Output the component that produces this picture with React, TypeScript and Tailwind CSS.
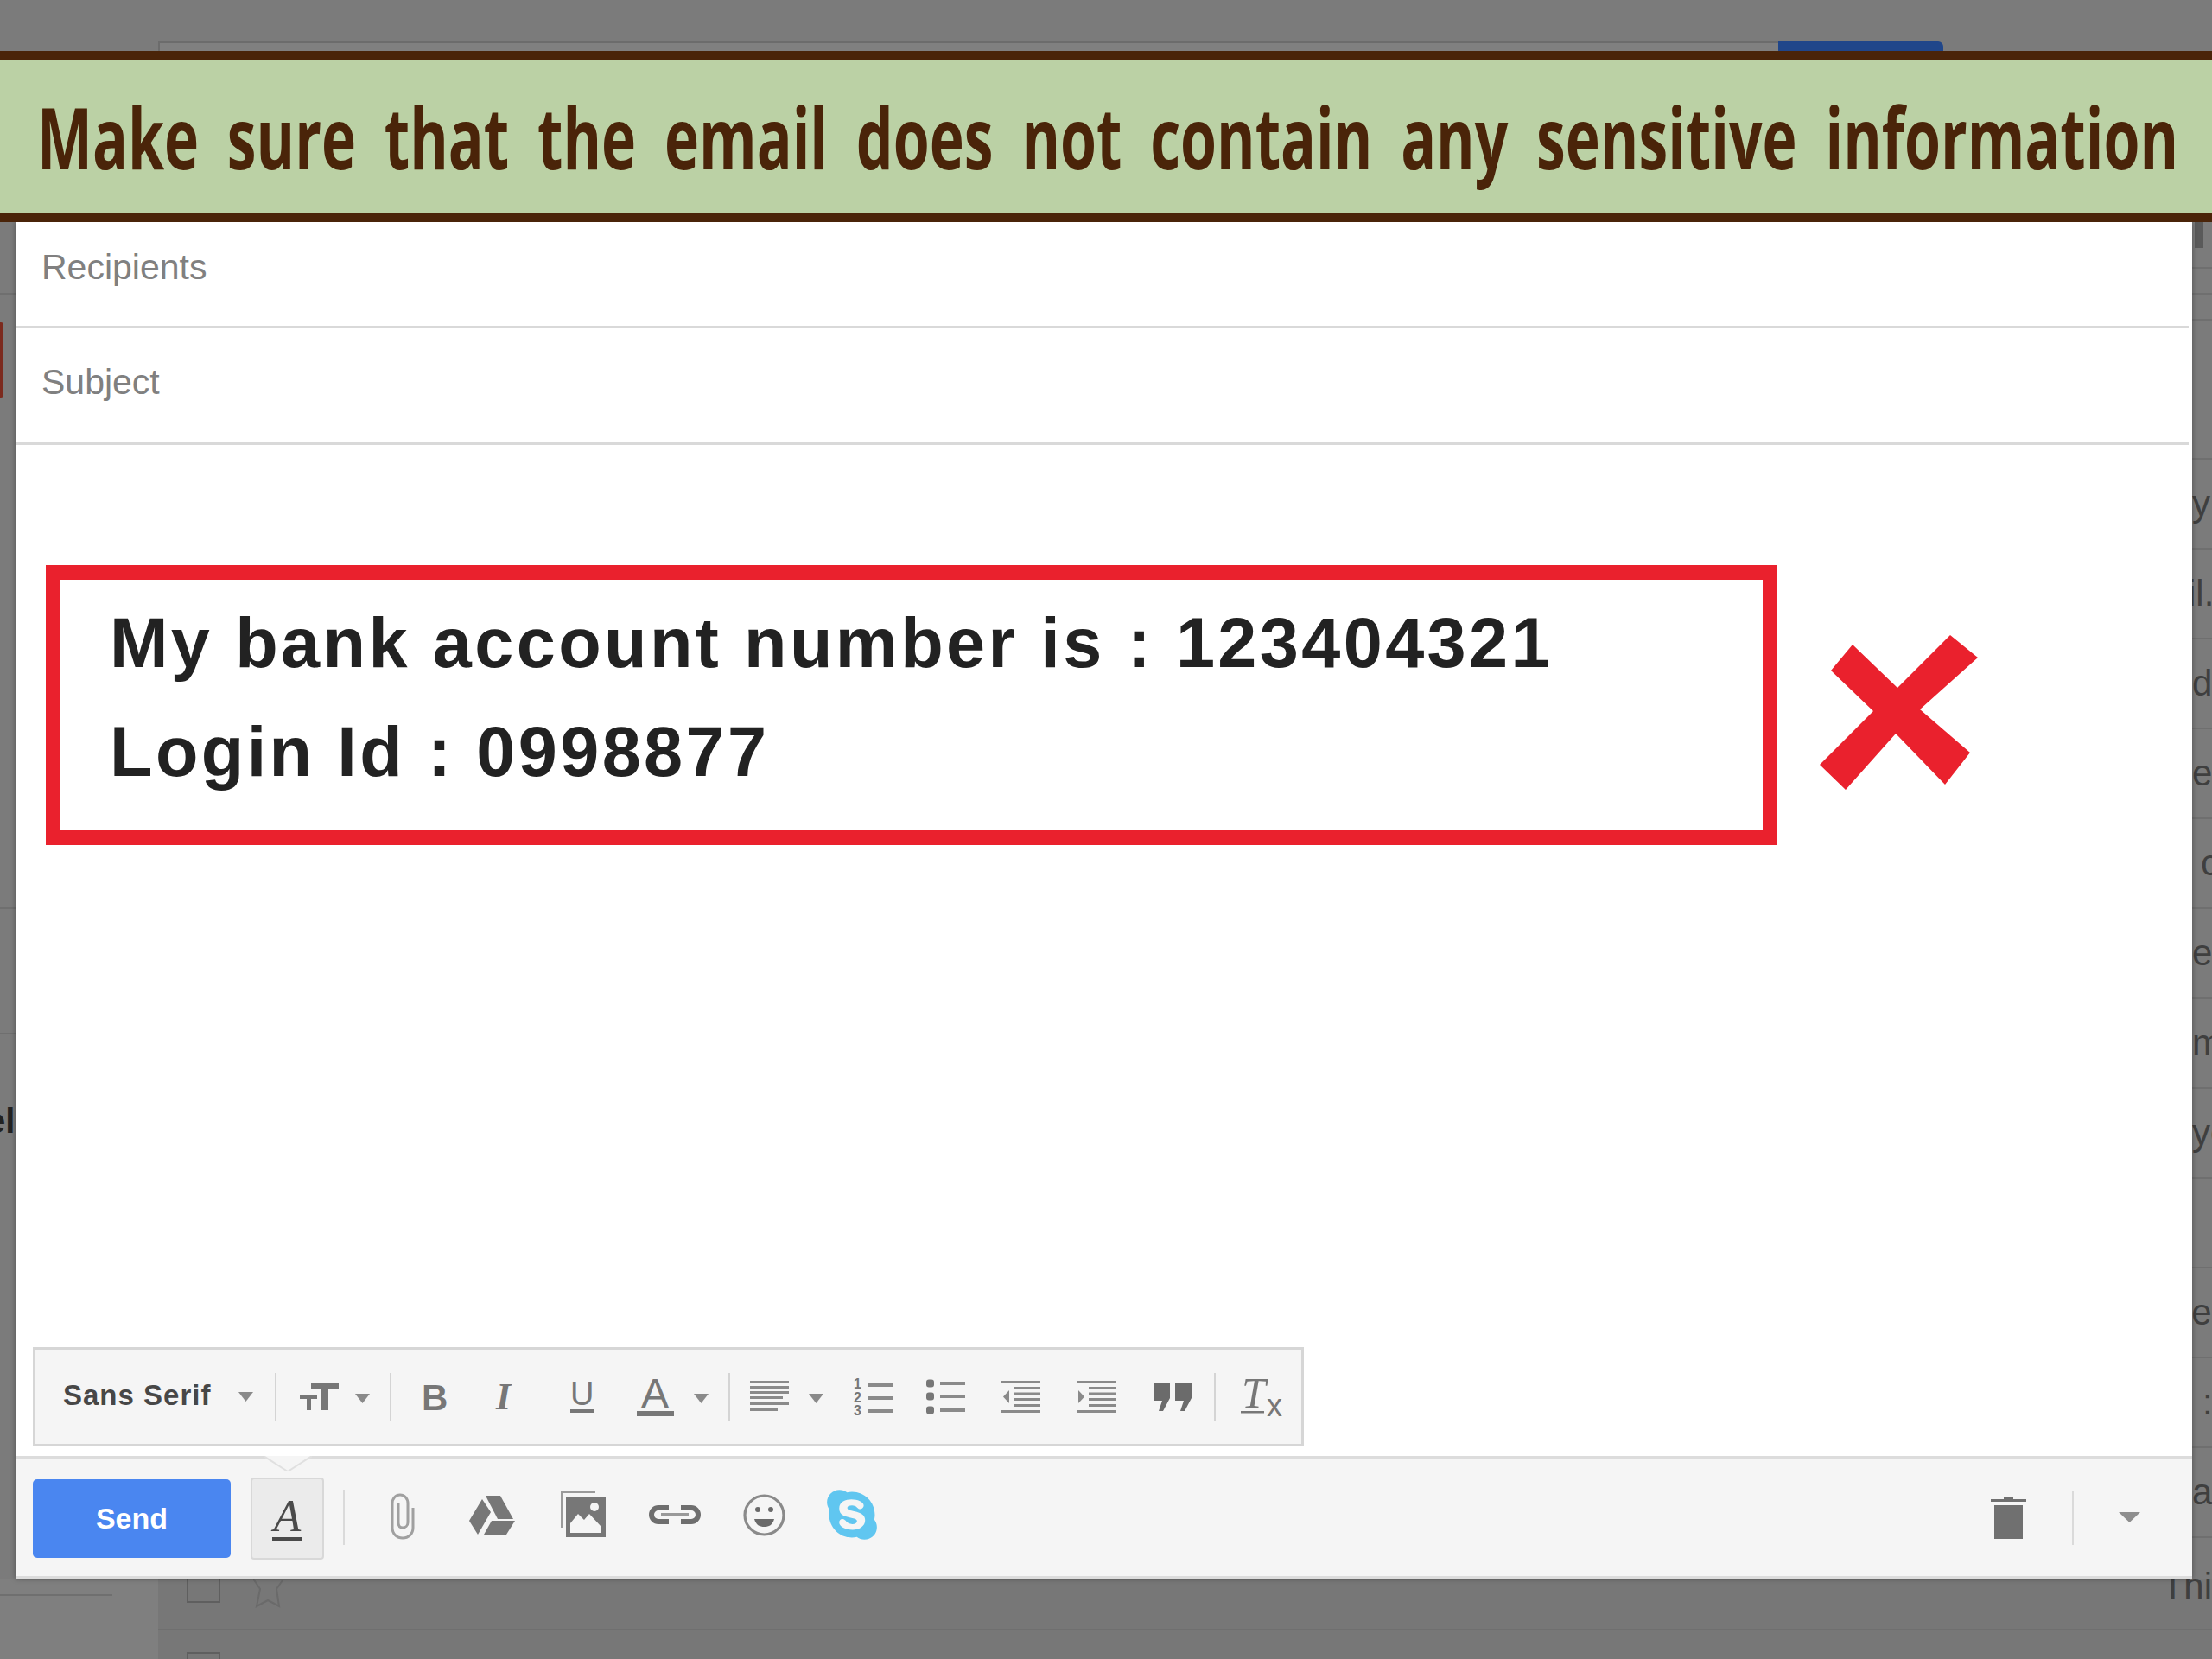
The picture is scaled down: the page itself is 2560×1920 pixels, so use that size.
import { FaSkype } from "react-icons/fa"

const G = "#777777"

function Arrow({ w = 17, h = 11, color = "#8a8a8a", className = "" }: { w?: number; h?: number; color?: string; className?: string }) {
  return (
    <svg width={w} height={h} viewBox="0 0 17 11" preserveAspectRatio="none" className={className}>
      <polygon points="0,0 17,0 8.5,11" fill={color} />
    </svg>
  )
}

function Sep({ className = "" }: { className?: string }) {
  return <div className={`w-[2px] h-[56px] bg-[#d4d4d4] ${className}`} />
}

function LetterIcon({ w, h, text, size, x, y, weight = 400, italic = false, serif = false, line }: {
  w: number; h: number; text: string; size: number; x: number; y: number; weight?: number; italic?: boolean; serif?: boolean; line?: [number, number, number, number]
}) {
  return (
    <svg width={w} height={h} viewBox={`0 0 ${w} ${h}`} className="overflow-visible">
      <text x={x} y={y} fontSize={size} fontWeight={weight} fontStyle={italic ? "italic" : "normal"} fill={G}
        fontFamily={serif ? "'Liberation Serif', serif" : "'Liberation Sans', sans-serif"}>{text}</text>
      {line && <rect x={line[0]} y={line[1]} width={line[2]} height={line[3]} fill={G} />}
    </svg>
  )
}

function Lines({ rows, w = 45, h = 37 }: { rows: [number, number, number][]; w?: number; h?: number }) {
  return (
    <svg width={w} height={h} viewBox={`0 0 ${w} ${h}`}>
      {rows.map(([x, y, rw], i) => <rect key={i} x={x} y={y} width={rw} height={3} fill="#8a8a8a" />)}
    </svg>
  )
}

function NumList() {
  return (
    <svg width="45" height="44" viewBox="0 0 45 44" className="overflow-visible">
      {[12, 28, 43].map((y, i) => (
        <text key={y} x="0" y={y} fontSize="16" fontWeight="700" fill={G} fontFamily="'Liberation Sans', sans-serif">{i + 1}</text>
      ))}
      {[6, 21, 36].map((y) => <rect key={y} x="16" y={y} width="29" height="4" fill="#8a8a8a" />)}
    </svg>
  )
}

function BulletList() {
  return (
    <svg width="45" height="44" viewBox="0 0 45 44">
      {[6, 21, 37].map((y) => (
        <g key={y}>
          <rect x="0" y={y - 4.5} width="9" height="9" rx="3" fill={G} />
          <rect x="16" y={y - 2} width="29" height="4" fill="#8a8a8a" />
        </g>
      ))}
    </svg>
  )
}

function IndentIcon({ flip = false }: { flip?: boolean }) {
  return (
    <svg width="45" height="37" viewBox="0 0 45 37">
      {[0, 34].map((y) => <rect key={y} x="0" y={y} width="45" height="3" fill="#8a8a8a" />)}
      {[7, 13.5, 20, 27].map((y) => <rect key={y} x="14" y={y} width="31" height="3" fill="#8a8a8a" />)}
      <polygon points={flip ? "2,11 9,18.5 2,26" : "9,11 2,18.5 9,26"} fill="#8a8a8a" />
    </svg>
  )
}

function Quote() {
  return (
    <svg width="44" height="32" viewBox="0 0 44 32">
      <path d="M0 0H19V17L11 32H6L10 20H0Z M25 0H44V17L36 32H31L35 20H25Z" fill="#6b6b6b" />
    </svg>
  )
}

function Paperclip() {
  return (
    <svg width="28" height="54" viewBox="0 0 28 54" fill="none" stroke="#a0a0a0" strokeWidth="3">
      <path d="M26 17V40C26 47 21 52 14 52C7 52 2 47 2 40V12C2 6 6 2 11 2C16 2 20 6 20 12V34C20 38 17 40 14 40C11 40 9 38 9 34V12" />
    </svg>
  )
}

function Drive() {
  return (
    <svg width="53" height="45" viewBox="0 0 53 45" fill="#777777">
      <polygon points="19,0 36,0 51,27 33,27" />
      <polygon points="15,4 25,19 10,45 0,29" />
      <polygon points="26,29 53,29 43,45 17,45" />
    </svg>
  )
}

function ImageIcon() {
  return (
    <svg width="52" height="53" viewBox="0 0 52 53">
      <path d="M1 42V1H40" fill="none" stroke="#9a9a9a" strokeWidth="2" />
      <rect x="6" y="7" width="46" height="46" fill="#777777" />
      <circle cx="39" cy="18" r="5" fill="#f5f5f5" />
      <path d="M11 48V37L20 26L27 33L33 26L46 40V48Z" fill="#f5f5f5" />
    </svg>
  )
}

function LinkIcon() {
  return (
    <svg width="60" height="22" viewBox="0 0 60 22" fill="none" stroke="#6e6e6e" strokeWidth="6">
      <path d="M23 3H11a8 8 0 0 0 0 16H23" />
      <path d="M37 3H49a8 8 0 0 1 0 16H37" />
      <path d="M14 11H46" stroke="#999999" strokeWidth="4" />
    </svg>
  )
}

function Smile() {
  return (
    <svg width="49" height="49" viewBox="0 0 49 49">
      <circle cx="24.5" cy="24.5" r="22.5" fill="none" stroke="#8a8a8a" strokeWidth="3.2" />
      <circle cx="17" cy="18" r="3" fill="#6a6a6a" />
      <circle cx="32" cy="18" r="3" fill="#6a6a6a" />
      <path d="M13 29H36C34 36 30 38 24.5 38C19 38 15 36 13 29Z" fill="#6a6a6a" />
    </svg>
  )
}

function Trash() {
  return (
    <svg width="41" height="48" viewBox="0 0 41 48" fill="#707070">
      <rect x="15" y="0" width="11" height="3" />
      <rect x="0" y="2" width="41" height="3" />
      <rect x="4" y="9" width="33" height="39" />
    </svg>
  )
}

function CrossMark() {
  return (
    <svg width="183" height="180" viewBox="0 0 183 180" className="mt-[81px] ml-[49px]">
      <polygon
        points="13,41 38,11 90,61 151,0 183,26 116,86 174,136 145,173 88,114 30,179 0,150 62,88"
        fill="#ea212d"
      />
    </svg>
  )
}

function FormatBar() {
  return (
    <div className="flex items-center w-[1471px] h-[115px] ml-[20px] bg-[#f5f5f5] border-[3px] border-[#d6d6d6] pl-[32px]">
      <span className="w-[170px] mb-[4px] text-[33px] font-bold text-[#474747] tracking-[1px] whitespace-nowrap font-['Liberation_Sans',sans-serif]">Sans Serif</span>
      <Arrow className="ml-[33px]" />
      <Sep className="ml-[25px]" />
      <svg width="45" height="31" viewBox="0 0 45 31" className="ml-[27px]">
        <path d="M13 0H45V6H33V31H25V6H13Z M0 14H20V18H13V31H8V18H0Z" fill={G} />
      </svg>
      <Arrow className="ml-[19px] mt-[4px]" />
      <Sep className="ml-[23px]" />
      <div className="ml-[35px]"><LetterIcon w={27} h={32} text="B" size={42} x={0} y={31} weight={700} /></div>
      <div className="ml-[56px]"><LetterIcon w={31} h={30} text="I" size={44} x={3} y={29} weight={700} italic serif /></div>
      <div className="ml-[56px]"><LetterIcon w={31} h={37} text="U" size={38} x={2} y={28} line={[2, 33, 27, 4]} /></div>
      <div className="ml-[48px]"><LetterIcon w={43} h={44} text="A" size={48} x={5} y={34} line={[0, 38, 43, 6]} /></div>
      <Arrow className="ml-[23px] mt-[4px]" />
      <Sep className="ml-[23px]" />
      <div className="ml-[23px]">
        <Lines rows={[[0, 0, 45], [0, 6, 45], [0, 12, 45], [0, 18, 38], [0, 25, 45], [0, 32, 32]]} />
      </div>
      <Arrow className="ml-[23px] mt-[4px]" />
      <div className="ml-[35px]"><NumList /></div>
      <div className="ml-[39px]"><BulletList /></div>
      <div className="ml-[42px]"><IndentIcon /></div>
      <div className="ml-[42px]"><IndentIcon flip /></div>
      <div className="ml-[44px]"><Quote /></div>
      <Sep className="ml-[26px]" />
      <div className="ml-[29px]">
        <svg width="48" height="44" viewBox="0 0 48 44" className="overflow-visible">
          <text x="1" y="34" fontSize="50" fontStyle="italic" fill={G} fontFamily="'Liberation Serif', serif">T</text>
          <rect x="0" y="38" width="27" height="2.5" fill={G} />
          <text x="30" y="44" fontSize="36" fill={G} fontFamily="'Liberation Sans', sans-serif">x</text>
        </svg>
      </div>
    </div>
  )
}

function ActionBar() {
  return (
    <div className="relative flex items-center h-[142px] mt-[11px] pl-[20px] pr-[60px] bg-[#f5f5f5] border-t-[3px] border-b-[3px] border-[#dcdcdc]">
      <svg width="56" height="18" viewBox="0 0 56 18" className="absolute left-[287px] -top-[3px]">
        <polygon points="0,0 56,0 28,22" fill="#f5f5f5" />
        <polyline points="0,0 28,18 56,0" fill="none" stroke="#e0e0e0" strokeWidth="2" />
      </svg>
      <button className="w-[229px] h-[91px] mt-[3px] rounded-[5px] bg-[#4a86f0] text-white text-[34px] font-bold font-['Liberation_Sans',sans-serif]">Send</button>
      <div className="flex flex-col items-center w-[85px] h-[95px] mt-[2px] ml-[23px] rounded-[4px] border-2 border-[#d8d8d8] bg-[#ebebeb] pt-[20px]">
        <span className="italic text-[52px] leading-[46px] text-[#4a4a4a] font-['Liberation_Serif',serif]">A</span>
        <div className="w-[35px] h-[4px] mt-[1px] bg-[#4a4a4a]" />
      </div>
      <div className="w-[2px] h-[64px] ml-[22px] bg-[#dadada]" />
      <div className="ml-[53px] mt-[-2px]"><Paperclip /></div>
      <div className="ml-[63px] mt-[-6px]"><Drive /></div>
      <div className="ml-[53px] mt-[-7px]"><ImageIcon /></div>
      <div className="ml-[50px] mt-[-6px]"><LinkIcon /></div>
      <div className="ml-[49px] mt-[-6px]"><Smile /></div>
      <FaSkype className="ml-[44px] mt-[-7px] w-[66px] h-[66px] text-[#60c6f0]" />
      <div className="ml-auto mt-[1px]"><Trash /></div>
      <div className="w-[2px] h-[63px] ml-[53px] bg-[#dadada]" />
      <Arrow w={25} h={12} color="#8e8e8e" className="ml-[52px]" />
    </div>
  )
}

const rightRows: [string, string][] = [
  ["y", "ml-0"],
  ["il.", "-ml-[5px]"],
  ["d", "ml-0"],
  ["e", "ml-0"],
  ["c", "ml-[10px]"],
  ["e", "ml-0"],
  ["m", "ml-0"],
  ["ye", "ml-0"],
  ["", "ml-0"],
  ["pe", "-ml-[24px]"],
  [":", "ml-[12px]"],
  ["a", "ml-0"],
]

export default function App() {
  return (
    <div className="flex flex-col w-[2560px] h-[1920px] overflow-hidden bg-[#7b7b7b] font-['Liberation_Sans',sans-serif]">
      <div className="flex h-[59px] pt-[48px] pl-[183px] pr-[311px]">
        <div className="flex-1 bg-[#808080] border-t-2 border-l-2 border-[#6c6c6c]" />
        <div className="w-[191px] rounded-tr-[6px] bg-[#20468a]" />
      </div>

      <div className="z-10 flex items-center h-[198px] pl-[43px] overflow-hidden bg-[#bbd1a5] border-y-[10px] border-[#4a2409]">
        <span className="origin-left scale-x-[0.692] text-[98px] font-bold text-[#4a2409] whitespace-nowrap [word-spacing:22px] font-['Open_Sans',sans-serif]">
          Make sure that the email does not contain any sensitive information
        </span>
      </div>

      <div className="flex h-[1570px]">
        <div className="flex flex-col w-[18px] text-[40px] overflow-hidden">
          <div className="h-[84px] shrink-0 border-b-2 border-[#6f6f6f]" />
          <div className="w-[4px] h-[88px] shrink-0 mt-[32px] rounded-r-[3px] bg-[#7c2a1e]" />
          <div className="h-[591px] shrink-0 border-b-2 border-[#6f6f6f]" />
          <div className="h-[145px] shrink-0 border-b-2 border-[#6f6f6f]" />
          <div className="mt-[80px] font-bold text-[#222] whitespace-nowrap leading-[40px] -ml-[16px]">el</div>
        </div>

        <div className="z-[5] flex flex-col w-[2519px] bg-white shadow-[0_0_6px_rgba(0,0,0,0.35)]">
          <div className="flex items-center h-[123px] mr-[4px] pb-[14px] pl-[30px] border-b-[3px] border-[#d9d9d9] text-[41px] text-[#808080]">Recipients</div>
          <div className="flex items-center h-[135px] mr-[4px] pb-[6px] pl-[30px] border-b-[3px] border-[#d9d9d9] text-[41px] text-[#808080]">Subject</div>

          <div className="flex items-start mt-[139px] ml-[35px]">
            <div className="w-[2004px] h-[324px] pt-[10px] pl-[57px] border-[17px] border-[#ea212d]">
              <p className="text-[81px] leading-[126px] font-bold text-[#222] tracking-[3.4px] whitespace-nowrap">My bank account number is : 123404321</p>
              <p className="text-[81px] leading-[126px] font-bold text-[#222] tracking-[3.4px] whitespace-nowrap">Login Id : 0998877</p>
            </div>
            <CrossMark />
          </div>

          <div className="mt-auto"><FormatBar /></div>
          <ActionBar />
        </div>

        <div className="flex flex-col flex-1 overflow-hidden text-[42px] text-[#3f3f3f]">
          <div className="relative h-[275px] shrink-0 border-b-2 border-[#6f6f6f]">
            <div className="w-[10px] h-[30px] ml-[3px] bg-[#5a5a5a]" />
            <div className="h-[24px] border-b-2 border-[#6f6f6f]" />
            <div className="h-[30px] border-b-2 border-[#6f6f6f]" />
            <div className="h-[30px] border-b-2 border-[#6f6f6f]" />
          </div>
          {rightRows.map(([t, offset], i) => (
            <div key={i} className="flex items-center h-[104px] shrink-0 border-b-2 border-[#6f6f6f] whitespace-pre leading-none">
              <span className={offset}>{t}</span>
            </div>
          ))}
        </div>
      </div>

      <div className="flex flex-1">
        <div className="w-[183px] shrink-0 bg-[#7f7f7f]">
          <div className="w-[130px] h-[20px] border-b-2 border-[#6f6f6f]" />
        </div>
        <div className="relative flex-1 bg-[#777777]">
          <div className="h-[60px] border-b-2 border-[#6f6f6f]">
            <div className="flex items-start">
              <div className="w-[39px] h-[28px] ml-[33px] border-2 border-t-0 border-[#5f5f5f]" />
              <svg width="36" height="34" viewBox="0 0 36 34" className="ml-[38px]">
                <polyline points="0,0 8,12 4,32 17,25 30,32 27,12 34,2" fill="none" stroke="#6a6a6a" strokeWidth="2" />
              </svg>
              <span className="ml-auto -mt-[15px] text-[42px] leading-[48px] text-[#3f3f3f]">Thi</span>
            </div>
          </div>
          <div className="w-[39px] h-[8px] mt-[25px] ml-[33px] border-2 border-b-0 border-[#5f5f5f]" />
        </div>
      </div>
    </div>
  )
}
